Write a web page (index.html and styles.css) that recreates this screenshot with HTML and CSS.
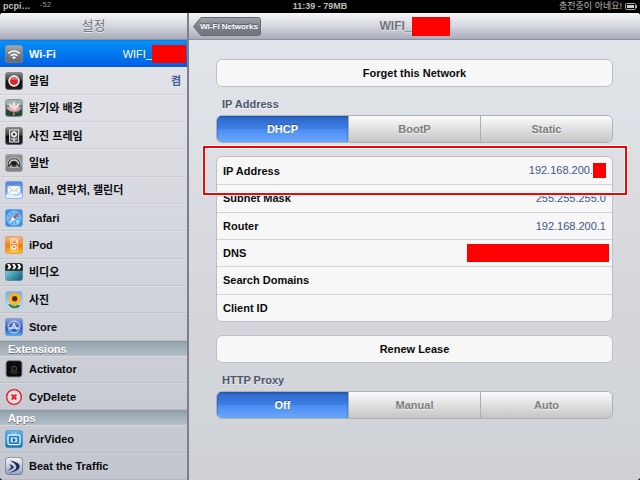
FILE: index.html
```html
<!DOCTYPE html>
<html lang="ko">
<head>
  <meta charset="UTF-8">
  <meta name="viewport" content="width=device-width, initial-scale=1.0">
  <title>설정</title>
  <link rel="stylesheet" href="styles.css">
</head>
<body>
  <!-- shared gradients for the icons -->
  <svg class="defs" aria-hidden="true">
    <defs>
      <linearGradient id="grey" x2="0" y2="1"><stop offset="0" stop-color="#a9abad"/><stop offset=".5" stop-color="#7c7f82"/><stop offset="1" stop-color="#65686b"/></linearGradient>
      <linearGradient id="black" x2="0" y2="1"><stop offset="0" stop-color="#8b8b8b"/><stop offset=".45" stop-color="#3a3a3a"/><stop offset=".5" stop-color="#0d0d0d"/><stop offset="1" stop-color="#222"/></linearGradient>
      <linearGradient id="blue" x2="0" y2="1"><stop offset="0" stop-color="#5b83e0"/><stop offset=".6" stop-color="#5ea5f2"/><stop offset="1" stop-color="#a5dcfa"/></linearGradient>
      <linearGradient id="orange" x2="0" y2="1"><stop offset="0" stop-color="#f9b982"/><stop offset=".45" stop-color="#f48a2c"/><stop offset=".5" stop-color="#f27600"/><stop offset="1" stop-color="#ffc02c"/></linearGradient>
      <linearGradient id="teal" x2="1" y2="1"><stop offset="0" stop-color="#c4e8ee"/><stop offset=".5" stop-color="#4fa5b8"/><stop offset="1" stop-color="#11566f"/></linearGradient>
      <linearGradient id="sky" x2="0" y2="1"><stop offset="0" stop-color="#72a9e4"/><stop offset="1" stop-color="#c8e4f4"/></linearGradient>
      <linearGradient id="store" x2="0" y2="1"><stop offset="0" stop-color="#8da4e2"/><stop offset=".48" stop-color="#3e62c9"/><stop offset=".52" stop-color="#1d3fb5"/><stop offset="1" stop-color="#4fb5f2"/></linearGradient>
      <linearGradient id="video" x2="0" y2="1"><stop offset="0" stop-color="#5fb5ec"/><stop offset="1" stop-color="#1472b9"/></linearGradient>
      <linearGradient id="road" x2="0" y2="1"><stop offset="0" stop-color="#f5f6f8"/><stop offset="1" stop-color="#93a5c4"/></linearGradient>
    </defs>
  </svg>

  <!-- Status bar -->
  <div class="status">
    <div class="status-left"><b>pcpi…</b><span class="signal">-52</span></div>
    <b>11:39 - 79MB</b>
    <div class="status-right">
      <span>충전중이 아네요!</span>
      <svg class="battery" viewBox="0 0 12 7"><rect x=".5" y=".5" width="10" height="6" rx="1" fill="none" stroke="#aaa"/><path d="M2 2h7v3H2z" fill="#ccc"/><path d="M11 2h1v3h-1z" fill="#aaa"/></svg>
    </div>
  </div>

  <div class="split">
    <!-- Sidebar -->
    <nav class="sidebar">
      <h1 class="bar">설정</h1>
      <ul class="menu">
        <li class="item active"><a href="#">
          <svg class="icon" viewBox="0 0 54 54"><rect x="1" y="1" width="52" height="52" rx="9" fill="url(#grey)" stroke="#8e9498" stroke-width="2"/><g fill="none" stroke="#fff" stroke-width="5"><path d="M10 25q17-14 34 0"/><path d="M17 32q10-8 20 0"/></g><path d="M21 37q6-5 12 0l-6 6z" fill="#fff"/></svg>
          <span>Wi-Fi</span><span class="value">WIFI_<i class="mask"></i></span></a></li>
        <li class="item"><a href="#">
          <svg class="icon" viewBox="0 0 54 54"><rect x="1" y="1" width="52" height="52" rx="9" fill="url(#black)" stroke="#777" stroke-width="2"/><circle cx="27" cy="27" r="17" fill="#fff"/><circle cx="27" cy="27" r="12" fill="#d8262b"/><path d="M16 25a11 11 0 0 1 22 0q-11-5-22 0z" fill="#ea6a6c"/></svg>
          <span>알림</span><span class="value bold">켬</span></a></li>
        <li class="item"><a href="#">
          <svg class="icon" viewBox="0 0 54 54"><rect x="1" y="1" width="52" height="52" rx="9" fill="#4c6f62" stroke="#9aa8a4" stroke-width="2"/><path d="M3 3h48v15q-24 12-48 0z" fill="#9fb3ad"/><path d="M3 34l14-6 18 14 16-8v14q-24 8-48 0z" fill="#1e4636"/><g fill="#f6dde2"><path d="M27 6q10 14 2 32-13-17-2-32z"/><path d="M12 11q13 8 14 27-16-10-14-27z"/><path d="M43 12q-15 7-16 26 16-8 16-26z"/></g><g fill="#e9a0af"><path d="M4 23q17-1 23 15-17 1-23-15z"/><path d="M50 24q-16-1-24 14 17 1 24-14z"/></g><path d="M24 38h5v12h-5z" fill="#c86c72"/></svg>
          <span>밝기와 배경</span></a></li>
        <li class="item"><a href="#">
          <svg class="icon" viewBox="0 0 54 54"><rect x="1" y="1" width="52" height="52" rx="9" fill="url(#black)" stroke="#777" stroke-width="2"/><rect x="14" y="9" width="27" height="36" fill="#555" stroke="#eee" stroke-width="3"/><circle cx="27" cy="22" r="9" fill="#eee"/><circle cx="27" cy="22" r="4" fill="#444"/><path d="M27 30v12M18 35q7 0 9 6 2-6 9-6" fill="none" stroke="#eee" stroke-width="3"/></svg>
          <span>사진 프레임</span></a></li>
        <li class="item"><a href="#">
          <svg class="icon" viewBox="0 0 54 54"><rect x="1" y="1" width="52" height="52" rx="9" fill="#909294" stroke="#aaa" stroke-width="2"/><path d="M6 32a21 21 0 0 1 42 0v8H6z" fill="#3d3e40" stroke="#c4c5c6" stroke-width="3"/><path d="M13 31a14 13 0 0 1 28 0" fill="none" stroke="#d8d9da" stroke-width="4"/><path d="M27 30V16M27 30l13 9M27 30l-13 9" stroke="#a9abac" stroke-width="4"/><circle cx="27" cy="29" r="7" fill="#1d1d1e"/><path d="M3 36q10 7 24 7t24-7v12q-2 4-6 4H9q-5 0-6-4z" fill="#808284"/></svg>
          <span>일반</span></a></li>
        <li class="item"><a href="#">
          <svg class="icon" viewBox="0 0 54 54"><rect x="1" y="1" width="52" height="52" rx="9" fill="url(#blue)" stroke="#7d9ce0" stroke-width="2"/><path d="M3 42q12-8 24-1t24-4v10q-2 4-6 4H8q-5 0-5-4z" fill="#dff3fd"/><rect x="8" y="15" width="38" height="25" rx="2" fill="#fafafa" stroke="#b6c4d6"/><path d="M9 16l18 15 18-15M9 39l13-12M45 39L32 27" fill="none" stroke="#9aa7b8" stroke-width="2"/></svg>
          <span>Mail, 연락처, 캘린더</span></a></li>
        <li class="item"><a href="#">
          <svg class="icon" viewBox="0 0 54 54"><rect x="1" y="1" width="52" height="52" rx="9" fill="#3d8fe4" stroke="#79a9df" stroke-width="2"/><circle cx="27" cy="27" r="21" fill="#5baaf0" stroke="#8cc4f5" stroke-width="3"/><path d="M27 7v40M7 27h40M13 13l28 28" stroke="#b4dcfa" stroke-width="2"/><path d="M11 44l13-20 6 6z" fill="#fff"/><path d="M44 9L24 24l6 6z" fill="#d8433b"/><path d="M34 34q8-4 10 4l-6 10q-6-4-4-14z" fill="#9fdcf8"/></svg>
          <span>Safari</span></a></li>
        <li class="item"><a href="#">
          <svg class="icon" viewBox="0 0 54 54"><rect x="1" y="1" width="52" height="52" rx="9" fill="url(#orange)" stroke="#d78b3a" stroke-width="2"/><rect x="17" y="8" width="21" height="38" rx="3" fill="none" stroke="#fff" stroke-width="2"/><rect x="21" y="12" width="13" height="10" fill="none" stroke="#fff" stroke-width="2"/><circle cx="27" cy="34" r="6" fill="none" stroke="#fff" stroke-width="4"/></svg>
          <span>iPod</span></a></li>
        <li class="item"><a href="#">
          <svg class="icon" viewBox="0 0 54 54"><rect x="1" y="1" width="52" height="52" rx="9" fill="url(#teal)" stroke="#5d8d9a" stroke-width="2"/><path d="M1 10q0-9 9-9h34q9 0 9 9v12H1z" fill="#151515"/><path d="M6 3h8l5 8-5 8H6l5-8zM21 3h8l5 8-5 8h-8l5-8zM36 3h8l5 8-5 8h-8l5-8z" fill="#eee"/><path d="M2 22h50" stroke="#333" stroke-width="3"/></svg>
          <span>비디오</span></a></li>
        <li class="item"><a href="#">
          <svg class="icon" viewBox="0 0 54 54"><rect x="1" y="1" width="52" height="52" rx="9" fill="url(#sky)" stroke="#a5c2dd" stroke-width="2"/><path d="M27 35v17M27 50q-12 0-16-9 12-1 16 9zM27 50q12 2 18-6-12-5-18 6z" fill="#487f2c" stroke="#487f2c" stroke-width="3"/><g fill="#fbb615"><ellipse cx="29" cy="23" rx="20" ry="8"/><ellipse cx="29" cy="23" rx="8" ry="19"/><ellipse cx="29" cy="23" rx="20" ry="8" transform="rotate(45 29 23)"/><ellipse cx="29" cy="23" rx="20" ry="8" transform="rotate(-45 29 23)"/></g><circle cx="29" cy="23" r="8" fill="#4d2b12"/></svg>
          <span>사진</span></a></li>
        <li class="item"><a href="#">
          <svg class="icon" viewBox="0 0 54 54"><rect x="1" y="1" width="52" height="52" rx="9" fill="url(#store)" stroke="#7488c4" stroke-width="2"/><circle cx="27" cy="27" r="18" fill="none" stroke="#dce6fb" stroke-width="3"/><path d="M17 36l12-20M37 36L25 16M12 30h30" fill="none" stroke="#dce6fb" stroke-width="4"/></svg>
          <span>Store</span></a></li>
        <li class="group">Extensions</li>
        <li class="item"><a href="#">
          <svg class="icon" viewBox="0 0 54 54"><rect x="3" y="2" width="48" height="49" rx="8" fill="#0c0c0c" stroke="#8a8a8a" stroke-width="3"/><rect x="21" y="20" width="13" height="13" rx="3" fill="none" stroke="#777" stroke-width="2"/><path d="M15 36q12 9 24 0" fill="none" stroke="#444" stroke-width="3"/></svg>
          <span>Activator</span></a></li>
        <li class="item"><a href="#">
          <svg class="icon" viewBox="0 0 54 54"><circle cx="27" cy="27" r="22" fill="#e3dfe5" stroke="#f0141c" stroke-width="4"/><path d="M20 20l14 14M34 20L20 34" stroke="#f0141c" stroke-width="6"/></svg>
          <span>CyDelete</span></a></li>
        <li class="group">Apps</li>
        <li class="item"><a href="#">
          <svg class="icon" viewBox="0 0 54 54"><rect x="1" y="1" width="52" height="52" rx="9" fill="url(#video)" stroke="#4b94c8" stroke-width="2"/><path d="M19 5l8 9 8-9" fill="none" stroke="#d9eefa" stroke-width="2"/><rect x="9" y="15" width="36" height="29" rx="5" fill="#1f7fc4" stroke="#e6f4fc" stroke-width="4"/><rect x="17" y="22" width="20" height="15" fill="#b9def4"/><path d="M24 24l8 6-8 6z" fill="#12466d"/></svg>
          <span>AirVideo</span></a></li>
        <li class="item"><a href="#">
          <svg class="icon" viewBox="0 0 54 54"><rect x="1" y="1" width="52" height="52" rx="12" fill="url(#road)" stroke="#555b66" stroke-width="2"/><path d="M14 10q32 6 30 20-3 14-34 18 26-9 24-19-2-9-20-19z" fill="#1c2c57"/><path d="M12 22q15 3 14 9-2 6-20 11 12-7 12-11 0-5-6-9z" fill="#263968"/></svg>
          <span>Beat the Traffic</span></a></li>
      </ul>
    </nav>

    <!-- Network details -->
    <main class="detail">
      <header class="bar">
        <button class="back" type="button"><svg viewBox="0 0 68 19" preserveAspectRatio="none" aria-hidden="true"><defs><linearGradient id="back" x2="0" y2="1"><stop offset="0" stop-color="#a0a4aa"/><stop offset=".5" stop-color="#7b8088"/><stop offset="1" stop-color="#70757d"/></linearGradient></defs><path d="M9 .5h56q2.500 0 2.500 2.500v13q0 2.500-2.500 2.500H9q-1 0-2-1L.5 9.500 7 1.500q1-1 2-1z" fill="url(#back)" stroke="#646a72"/></svg><span>Wi-Fi Networks</span></button>
        <h2>WIFI_<i class="mask"></i></h2>
      </header>

      <div class="content">
        <button class="action" type="button">Forget this Network</button>

        <h3>IP Address</h3>
        <div class="segments" role="radiogroup" aria-label="IP Address">
          <label><input type="radio" name="ip" checked><span>DHCP</span></label>
          <label><input type="radio" name="ip"><span>BootP</span></label>
          <label><input type="radio" name="ip"><span>Static</span></label>
        </div>

        <div class="info">
          <table>
            <tr><th scope="row">IP Address</th><td>192.168.200.<i class="mask small"></i></td></tr>
            <tr><th scope="row">Subnet Mask</th><td>255.255.255.0</td></tr>
            <tr><th scope="row">Router</th><td>192.168.200.1</td></tr>
            <tr><th scope="row">DNS</th><td><i class="mask wide"></i></td></tr>
            <tr><th scope="row">Search Domains</th><td></td></tr>
            <tr><th scope="row">Client ID</th><td></td></tr>
          </table>
          <div class="highlight"></div>
        </div>

        <button class="action" type="button">Renew Lease</button>

        <h3>HTTP Proxy</h3>
        <div class="segments" role="radiogroup" aria-label="HTTP Proxy">
          <label><input type="radio" name="proxy" checked><span>Off</span></label>
          <label><input type="radio" name="proxy"><span>Manual</span></label>
          <label><input type="radio" name="proxy"><span>Auto</span></label>
        </div>
      </div>
    </main>
  </div>
</body>
</html>
```
FILE: styles.css
```css
* {
  box-sizing: border-box;
}
body {
  display: flex;
  flex-direction: column;
  min-height: 100vh;
  margin: 0;
  background: #000;
  color: #0b0b0c;
  font-family: "Liberation Sans", "Noto Sans CJK KR", sans-serif;
  font-size: 11px;
  line-height: 14px;
}
h1, h2, h3, ul {
  margin: 0;
  padding: 0;
}
button {
  font: inherit;
  cursor: pointer;
}
.defs {
  position: absolute;
  width: 0;
  height: 0;
}

/* status bar */
.status {
  display: grid;
  grid-template-columns: 1fr auto 1fr;
  height: 13px;
  padding: 0 3px;
  color: #bdbdbd;
  font-size: 9px;
  line-height: 13px;
}
.status-left {
  display: flex;
  gap: 9px;
}
.signal {
  color: #999;
  font-size: 8px;
  line-height: 10px;
}
.status-right {
  display: flex;
  justify-content: flex-end;
  align-items: center;
  gap: 3px;
}
.battery {
  width: 12px;
  height: 7px;
}

.split {
  display: flex;
  flex: 1;
}
.bar {
  display: flex;
  align-items: center;
  justify-content: center;
  height: 27px;
  border-bottom: 1px solid #8e929e;
  background: linear-gradient(#f5f6f7, #d5d7dd 50%, #a9acba);
  color: #70757e;
  text-shadow: 0 1px 0 rgba(255, 255, 255, 0.6);
}
.mask {
  display: block;
  flex: none;
  width: 34px;
  height: 18px;
  background: #f00;
}

/* sidebar */
.sidebar {
  display: flex;
  flex: 0 0 187px;
  flex-direction: column;
  border-radius: 3px 0 0 3px;
  overflow: hidden;
  background: linear-gradient(#e4e6ea, #c3c6cf);
}
.sidebar .bar {
  font-size: 13px;
  font-weight: 400;
}
.menu {
  display: flex;
  flex: 1;
  flex-direction: column;
  list-style: none;
}
.item {
  display: flex;
  flex: 1 0 27px;
  border-top: 1px solid rgba(255, 255, 255, 0.25);
  border-bottom: 1px solid rgba(0, 0, 0, 0.07);
  font-weight: 700;
}
.item a {
  display: flex;
  flex: 1;
  align-items: center;
  gap: 6px;
  padding: 0 6px 0 5px;
  color: inherit;
  text-decoration: none;
}
.icon {
  width: 18px;
  height: 18px;
}
.value {
  display: flex;
  align-items: center;
  margin-left: auto;
  color: #4a639a;
  font-weight: 400;
}
.value.bold {
  font-weight: 700;
}
.item.active {
  border-color: #0a80ee #0a80ee #0759dc;
  background: linear-gradient(#0690f5, #0161e6);
  color: #fff;
}
.active a {
  padding-right: 1px;
}
.active .value {
  color: #fff;
}
.group {
  height: 15px;
  padding-left: 8px;
  border-top: 1px solid #8b99a4;
  background: linear-gradient(#95a3ad, #b4bfc8);
  color: #fff;
  font-weight: 700;
  line-height: 14px;
  text-shadow: 0 1px 0 rgba(0, 0, 0, 0.4);
}

/* detail pane */
.detail {
  flex: 1;
  border-left: 2px solid #7d8088;
  border-radius: 0 3px 3px 0;
  overflow: hidden;
  background: linear-gradient(#e2e6eb, #d5d6dc 65%, #d1d5da 85%, #cfd0d5);
}
.detail .bar {
  position: relative;
}
.detail h2 {
  display: flex;
  align-items: center;
  font-size: 12px;
}
.detail h2 .mask {
  width: 38px;
  height: 19px;
}
.back {
  position: absolute;
  left: 4px;
  top: 4px;
  width: 68px;
  height: 19px;
  padding: 0 0 0 4px;
  border: 0;
  background: none;
  color: #fff;
  font-size: 8px;
  font-weight: 700;
  text-shadow: 0 -1px 0 rgba(0, 0, 0, 0.4);
}
.back svg {
  position: absolute;
  left: 0;
  top: 0;
  width: 100%;
  height: 100%;
}
.back span {
  position: relative;
}
.content {
  padding: 19px 27px;
}
.action {
  display: block;
  width: 100%;
  height: 28px;
  border: 1px solid #bcbfc7;
  border-radius: 6px;
  background: #f7f7f7;
  color: #0b0b0c;
  font-weight: 700;
}
h3 {
  padding: 10px 6px 4px;
  color: #4c566c;
  font-size: 11px;
  text-shadow: 0 1px 0 rgba(255, 255, 255, 0.6);
}
.segments {
  display: flex;
  height: 28px;
  border: 1px solid #adb0b5;
  border-radius: 6px;
  overflow: hidden;
}
.segments label {
  position: relative;
  flex: 1;
  cursor: pointer;
}
.segments label + label {
  border-left: 1px solid #adaeb0;
}
.segments input {
  position: absolute;
  opacity: 0;
  margin: 0;
}
.segments span {
  display: flex;
  align-items: center;
  justify-content: center;
  height: 100%;
  background: linear-gradient(#fbfbfb, #c5c5c5);
  color: #7f7f7f;
  font-weight: 700;
  text-shadow: 0 1px 0 rgba(255, 255, 255, 0.6);
}
.segments input:checked + span {
  background: linear-gradient(#2c66c8, #3f7fe6 50%, #4b8cf2 52%, #6ba7fb);
  box-shadow: inset 0 1px 2px #1f4f9f;
  color: #fff;
  text-shadow: 0 -1px 0 rgba(0, 0, 0, 0.3);
}
.info {
  position: relative;
  margin: 13px 0;
}
.info table {
  width: 100%;
  height: 166px;
  border: 1px solid #bcbfc7;
  border-radius: 6px;
  border-spacing: 0;
  background: #f7f7f7;
}
.info th, .info td {
  height: 27px;
  padding: 0 6px;
  border-top: 1px solid #d3d4d7;
}
.info tr:first-child > * {
  border-top: 0;
}
.info th {
  text-align: left;
}
.info td {
  color: #3f5688;
  text-align: right;
}
.info .mask {
  display: inline-block;
  vertical-align: middle;
}
.info .small {
  width: 13px;
  height: 15px;
}
.info .wide {
  width: 142px;
  margin-right: -3px;
}
.highlight {
  position: absolute;
  top: -11px;
  left: -14px;
  right: -15px;
  height: 51px;
  border: 1px solid #fff;
  outline: 2px solid #f00;
  outline-offset: -3px;
  box-shadow: inset 0 0 0 3px #fff;
  pointer-events: none;
}
```
